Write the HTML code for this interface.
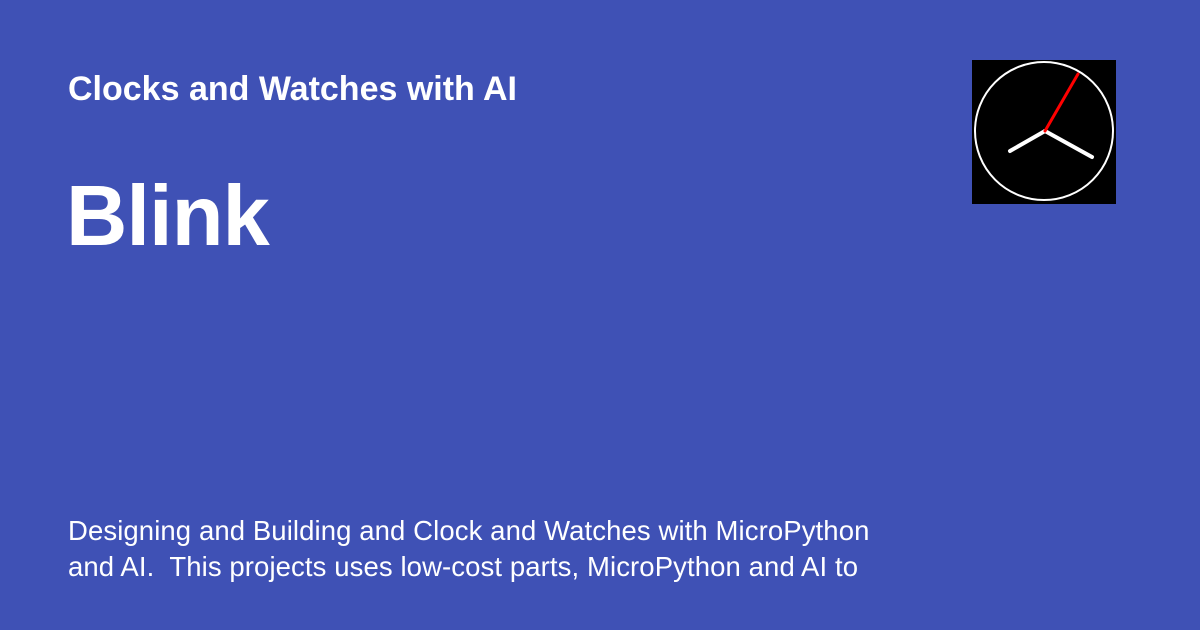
<!DOCTYPE html>
<html><head><meta charset="utf-8"><style>
html,body{margin:0;padding:0}
body{width:1200px;height:630px;background:#3f51b5;position:relative;overflow:hidden;font-family:"Liberation Sans",sans-serif;color:#fff}
.t{position:absolute;left:68px;top:70px;font-size:34px;font-weight:bold}
.h{position:absolute;left:66px;top:168px;font-size:85px;font-weight:bold;letter-spacing:-1px}
.d{position:absolute;left:68px;top:513px;font-size:27.5px;line-height:36px;width:900px;letter-spacing:0.1px;white-space:nowrap}
svg{position:absolute;left:972px;top:60px}
</style></head><body>
<div class="t">Clocks and Watches with AI</div>
<div class="h">Blink</div>
<div class="d">Designing and Building and Clock and Watches with MicroPython<br>and AI.&nbsp; This projects uses low-cost parts, MicroPython and AI to</div>
<svg width="144" height="144" viewBox="0 0 144 144">
<rect width="144" height="144" fill="#000"/>
<circle cx="72" cy="71" r="69" fill="none" stroke="#fff" stroke-width="2"/>
<line x1="73" y1="71" x2="38" y2="91" stroke="#fff" stroke-width="4" stroke-linecap="round"/>
<line x1="73" y1="71" x2="120" y2="97" stroke="#fff" stroke-width="4" stroke-linecap="round"/>
<line x1="73" y1="71" x2="106" y2="14" stroke="#f00" stroke-width="3" stroke-linecap="round"/>
</svg>
</body></html>
